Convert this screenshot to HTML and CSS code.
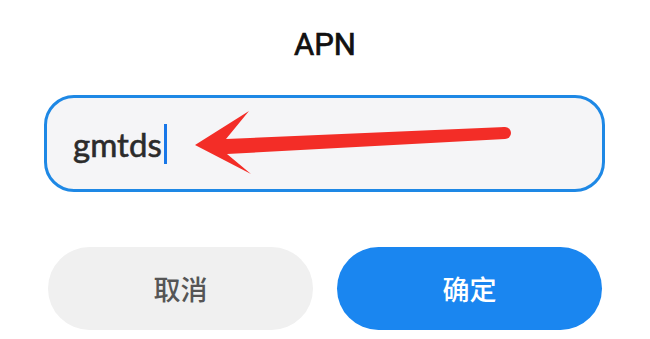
FILE: index.html
```html
<html>
<head>
<meta http-equiv="Content-Type" content="text/html;charset=UTF-8"><title>APN</title>
<link rel="stylesheet" href="styles.css">
</head>
<body>
<div class="dialog">
  <div class="title">APN</div>
  <div class="field">
    <span class="value">gmtds</span><span class="caret"></span>
  </div>
  <div class="buttons">
    <div class="btn cancel">取消</div>
    <div class="btn ok">确定</div>
  </div>
</div>

<svg class="mark" width="650" height="339" viewBox="0 0 650 339">
  <polygon fill="#f32d27" points="195,145 249,111 226,139 505,127 505,139 227,154 251,174"/>
  <circle fill="#f32d27" cx="505" cy="133" r="6"/>
</svg>
</body>
</html>
```

FILE: styles.css
```css
body {
    margin: 0px;
    padding: 0px;
    background-color: #ffffff;
    width: 650px;
    height: 339px;
    overflow: hidden;
}

.dialog {
    display: flex;
    flex-direction: column;
}

.title {
    font-family: Roboto, "Noto Sans", sans-serif;
    font-weight: 400;
    font-size: 31px;
    line-height: 36px;
    color: #111111;
    -webkit-text-stroke: 0.7px #111111;
    text-align: center;
    padding-top: 27px;
}

.field {
    box-sizing: border-box;
    margin: 32px 0px 0px 44px;
    width: 561px;
    height: 97px;
    border: 3px solid #1e88e5;
    border-radius: 30px;
    background-color: #f5f5f7;
    display: flex;
    align-items: center;
    padding-left: 26px;
}

.value {
    font-family: Lato, "Open Sans", sans-serif;
    font-weight: 400;
    font-size: 33px;
    color: #2b2b2b;
    -webkit-text-stroke: 0.6px #2b2b2b;
}

.caret {
    width: 3px;
    height: 40px;
    margin-left: 2px;
    background-color: #1877e8;
}

.buttons {
    display: flex;
    gap: 24px;
    margin: 55px 0px 0px 48px;
}

.btn {
    width: 265px;
    height: 83px;
    border-radius: 42px;
    display: flex;
    align-items: center;
    justify-content: center;
    font-family: "Noto Sans CJK SC", sans-serif;
    font-weight: 500;
    font-size: 27px;
}

.cancel {
    background-color: #f0f0f0;
    color: #555555;
}

.ok {
    background-color: #1a86f0;
    color: #ffffff;
}

.mark {
    position: absolute;
    top: 0px;
    left: 0px;
    pointer-events: none;
}
```
